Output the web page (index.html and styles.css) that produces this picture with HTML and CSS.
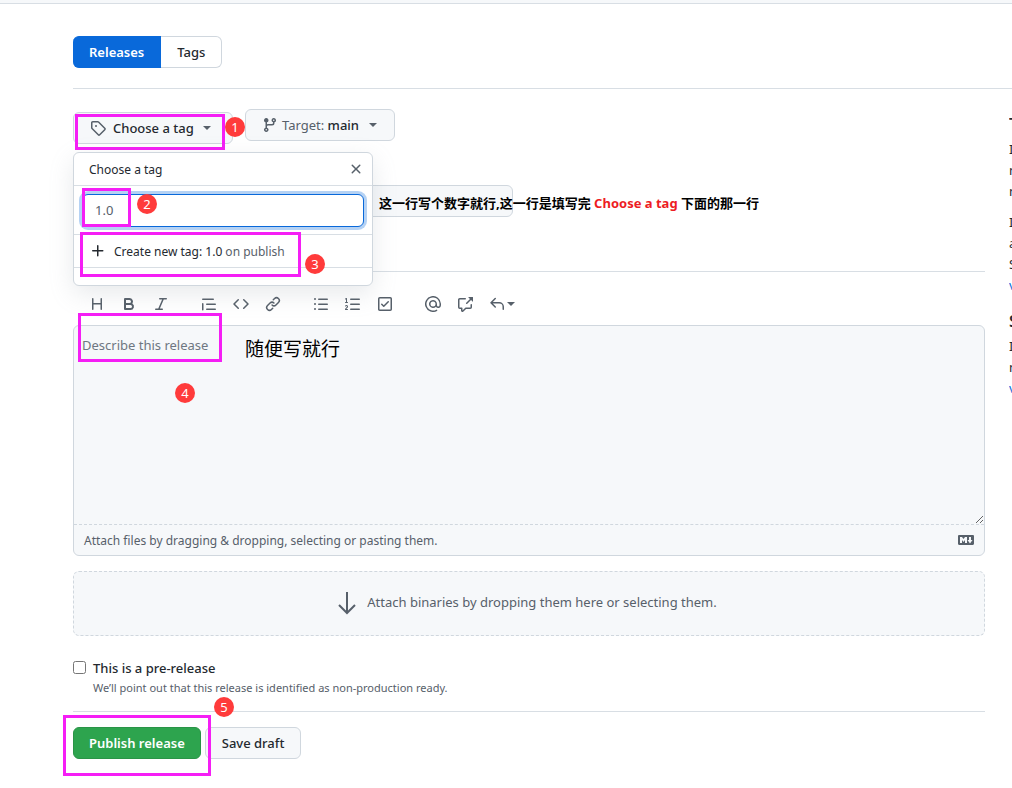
FILE: index.html
```
<!DOCTYPE html>
<html lang="en">
<head>
<meta charset="utf-8">
<title>New release</title>
<link rel="stylesheet" href="styles.css">
</head>
<body>
<header class="topbar"></header>
<main class="page">
  <nav class="subnav">
    <a class="subnav-item selected" href="#">Releases</a>
    <a class="subnav-item" href="#">Tags</a>
  </nav>
  <div class="columns">
    <form class="form">
      <div class="selectors">
        <div class="tag-picker">
          <button class="btn tag-btn" type="button">
            <svg class="icon" viewBox="0 0 16 16"><path d="M1.750 2.750a1 1 0 011-1h5.025a1 1 0 01.707.293l6.250 6.250a1 1 0 010 1.414l-5.025 5.025a1 1 0 01-1.414 0l-6.250-6.250a1 1 0 01-.293-.707z" fill="none" stroke="#57606a" stroke-width="1.500"/><circle cx="6" cy="6" r="1"/></svg>
            <span class="tag-label">Choose a tag</span><span class="caret"></span>
          </button>
          <span class="frame frame-tag"></span>
          <span class="badge badge-1">1</span>
          <div class="popover">
            <div class="popover-head">
              <span>Choose a tag</span>
              <button class="close" type="button" aria-label="Close"><svg class="icon" viewBox="0 0 16 16"><path d="M3.72 3.72a.75.75 0 011.06 0L8 6.94l3.22-3.22a.75.75 0 111.06 1.06L9.06 8l3.22 3.22a.75.75 0 11-1.06 1.06L8 9.06l-3.22 3.22a.75.75 0 01-1.06-1.06L6.94 8 3.72 4.78a.75.75 0 010-1.06z"/></svg></button>
            </div>
            <div class="popover-search">
              <input class="tag-input" type="text" value="1.0" aria-label="Find or create a new tag">
              <span class="frame frame-input"></span>
              <span class="badge badge-2">2</span>
            </div>
            <button class="create" type="button">
              <svg class="icon" viewBox="0 0 16 16"><path d="M7.75 2a.75.75 0 01.75.75V7h4.25a.75.75 0 110 1.5H8.5v4.250a.75.75 0 11-1.500 0V8.500H2.750a.75.75 0 010-1.500H7V2.750A.75.75 0 017.750 2z"/></svg>
              <span><span class="strong">Create new tag: 1.0</span> on publish</span>
            </button>
            <div class="popover-foot"></div>
            <span class="frame frame-create"></span>
            <span class="badge badge-3">3</span>
          </div>
        </div>
        <button class="btn target-btn" type="button">
          <svg class="icon" viewBox="0 0 16 16"><path d="M11.75 2.5a.75.75 0 100 1.500.75.75 0 000-1.500zm-2.250.75a2.250 2.250 0 113 2.122V6A2.500 2.500 0 0110 8.500H6a1 1 0 00-1 1v1.128a2.251 2.251 0 11-1.500 0V5.372a2.250 2.250 0 111.500 0v1.836A2.492 2.492 0 016 7h4a1 1 0 001-1v-.628A2.250 2.250 0 019.500 3.250zM4.250 12a.75.75 0 100 1.500.75.75 0 000-1.500zM3.500 3.250a.75.75 0 111.500 0 .75.75 0 01-1.500 0z"/></svg>
          <span class="muted">Target: <span class="strong">main</span></span><span class="caret"></span>
        </button>
      </div>

      <div class="title-row">
        <input class="title-input" type="text" aria-label="Release title">
        <p class="note title-note">这一行写个数字就行,这一行是填写完 <span class="red">Choose a tag</span> 下面的那一行</p>
      </div>

      <div class="toolbar">
        <div class="tools">
          <button class="tool" type="button" aria-label="Heading"><svg class="icon" viewBox="0 0 16 16"><path d="M3.750 2a.75.75 0 01.75.75V7h7V2.750a.75.75 0 011.500 0v10.500a.75.75 0 01-1.500 0V8.500h-7v4.750a.75.75 0 01-1.500 0V2.750A.75.75 0 013.750 2z"/></svg></button>
          <button class="tool" type="button" aria-label="Bold"><svg class="icon" viewBox="0 0 16 16"><path fill-rule="evenodd" d="M4 2a1 1 0 00-1 1v10a1 1 0 001 1h5.500a3.500 3.500 0 001.852-6.470A3.500 3.500 0 008.500 2H4zm4.500 5a1.500 1.500 0 100-3H5v3h3.500zM5 9v3h4.500a1.500 1.500 0 000-3H5z"/></svg></button>
          <button class="tool" type="button" aria-label="Italic"><svg class="icon" viewBox="0 0 16 16"><path d="M6 2.750A.75.75 0 016.750 2h6.500a.75.75 0 010 1.500h-2.505l-3.858 9H9.250a.75.75 0 010 1.500h-6.500a.75.75 0 010-1.500h2.505l3.858-9H6.750A.75.75 0 016 2.750z"/></svg></button>
        </div>
        <div class="tools">
          <button class="tool" type="button" aria-label="Quote"><svg class="icon" viewBox="0 0 16 16"><path d="M1.750 2.500a.75.75 0 000 1.500h10.500a.75.75 0 000-1.500H1.750zm4 5a.75.75 0 000 1.500h8.500a.75.75 0 000-1.500h-8.500zm0 5a.75.75 0 000 1.500h8.500a.75.75 0 000-1.500h-8.500zM2.500 7.750a.75.75 0 00-1.500 0v6a.75.75 0 001.500 0v-6z"/></svg></button>
          <button class="tool" type="button" aria-label="Code"><svg class="icon" viewBox="0 0 16 16"><path d="M4.720 3.220a.75.75 0 011.060 1.060L2.060 8l3.720 3.720a.75.75 0 11-1.060 1.060L.470 8.530a.75.75 0 010-1.060l4.250-4.250zm6.560 0a.75.75 0 10-1.060 1.060L13.940 8l-3.720 3.720a.75.75 0 101.060 1.060l4.250-4.250a.75.75 0 000-1.060l-4.250-4.250z"/></svg></button>
          <button class="tool" type="button" aria-label="Link"><svg class="icon" viewBox="0 0 16 16"><path d="M7.775 3.275a.75.75 0 001.060 1.060l1.250-1.250a2 2 0 112.830 2.830l-2.500 2.500a2 2 0 01-2.830 0 .75.75 0 00-1.060 1.060 3.500 3.500 0 004.950 0l2.500-2.500a3.500 3.500 0 00-4.950-4.950l-1.250 1.250zm-4.690 9.640a2 2 0 010-2.830l2.500-2.500a2 2 0 012.830 0 .75.75 0 001.060-1.060 3.500 3.500 0 00-4.950 0l-2.500 2.500a3.500 3.500 0 004.950 4.950l1.250-1.250a.75.75 0 00-1.060-1.060l-1.250 1.250a2 2 0 01-2.830 0z"/></svg></button>
        </div>
        <div class="tools">
          <button class="tool" type="button" aria-label="Bulleted list"><svg class="icon" viewBox="0 0 16 16"><path d="M2 4a1 1 0 100-2 1 1 0 000 2zm3.750-1.500a.75.75 0 000 1.500h8.500a.75.75 0 000-1.500h-8.500zm0 5a.75.75 0 000 1.500h8.500a.75.75 0 000-1.500h-8.500zm0 5a.75.75 0 000 1.500h8.500a.75.75 0 000-1.500h-8.500zM3 8a1 1 0 11-2 0 1 1 0 012 0zm-1 6a1 1 0 100-2 1 1 0 000 2z"/></svg></button>
          <button class="tool" type="button" aria-label="Numbered list"><svg class="icon" viewBox="0 0 16 16"><path d="M2.003 2.500a.5.5 0 00-.723-.447l-1.003.5a.5.5 0 00.446.895l.280-.140V6H.5a.5.5 0 000 1h2.006a.5.5 0 100-1h-.503V2.500zM5 3.250a.75.75 0 01.75-.75h8.500a.75.75 0 010 1.500h-8.500A.75.75 0 015 3.250zm0 5a.75.75 0 01.75-.75h8.500a.75.75 0 010 1.500h-8.500A.75.75 0 015 8.250zm0 5a.75.75 0 01.75-.75h8.500a.75.75 0 010 1.500h-8.500a.75.75 0 01-.75-.75zM.924 10.320l.003-.004a.851.851 0 01.144-.153A.660.660 0 011.500 10c.195 0 .306.068.374.146a.570.570 0 01.128.376c0 .453-.269.682-.800 1.078l-.035.025C.692 11.980 0 12.495 0 13.500a.5.5 0 00.5.5h2.003a.5.5 0 000-1H1.146c.132-.197.351-.372.654-.597l.047-.035c.470-.350 1.156-.858 1.156-1.845 0-.365-.118-.744-.377-1.038-.268-.303-.658-.484-1.126-.484-.480 0-.840.202-1.068.392a1.858 1.858 0 00-.348.384l-.007.011a.5.5 0 00.851.525z"/></svg></button>
          <button class="tool" type="button" aria-label="Task list"><svg class="icon" viewBox="0 0 16 16"><path fill-rule="evenodd" d="M2.500 2.750a.25.25 0 01.25-.25h10.500a.25.25 0 01.25.25v10.500a.25.25 0 01-.25.25H2.750a.25.25 0 01-.25-.25V2.750zM2.750 1A1.750 1.750 0 001 2.750v10.500c0 .966.784 1.750 1.750 1.750h10.500A1.750 1.750 0 0015 13.250V2.750A1.750 1.750 0 0013.250 1H2.750zm9.030 5.280a.75.75 0 00-1.060-1.060L6.750 9.190 5.280 7.720a.75.75 0 00-1.060 1.060l2 2a.75.75 0 001.060 0l4.500-4.500z"/></svg></button>
        </div>
        <div class="tools">
          <button class="tool" type="button" aria-label="Mention"><svg class="icon" viewBox="0 0 16 16"><path fill-rule="evenodd" d="M4.750 2.370a6.500 6.500 0 006.500 11.260.75.75 0 01.750 1.298 8 8 0 113.994-7.273.754.754 0 01.006.095v1.500a2.750 2.750 0 01-5.072 1.475A4 4 0 1112 8v1.250a1.250 1.250 0 002.500 0V7.867a6.500 6.500 0 00-9.750-5.496zM10.500 8a2.500 2.500 0 10-5 0 2.500 2.500 0 005 0z"/></svg></button>
          <button class="tool" type="button" aria-label="Reference"><svg class="icon" viewBox="0 0 16 16"><path d="M2.750 3.500a.25.25 0 00-.25.25v7.500c0 .138.112.25.25.25h2a.75.75 0 01.75.75v2.190l2.720-2.720a.75.75 0 01.530-.220h4.500a.25.25 0 00.25-.25v-2.500a.75.75 0 111.500 0v2.500A1.750 1.750 0 0113.250 13H9.060l-2.573 2.573A1.457 1.457 0 014 14.543V13H2.750A1.750 1.750 0 011 11.250v-7.500C1 2.784 1.784 2 2.750 2h5.500a.75.75 0 010 1.500h-5.500zM16 1.250v4.146a.25.25 0 01-.427.177L14.030 4.030l-3.750 3.750a.75.75 0 11-1.060-1.060l3.750-3.750-1.543-1.543A.25.25 0 0111.604 1h4.146a.25.25 0 01.25.25z"/></svg></button>
          <button class="tool reply" type="button" aria-label="Saved replies"><svg class="icon" viewBox="0 0 16 16"><path d="M6.780 1.970a.75.75 0 010 1.060L3.810 6h6.440A4.750 4.750 0 0115 10.750v2.500a.75.75 0 01-1.500 0v-2.500a3.250 3.250 0 00-3.250-3.250H3.810l2.970 2.970a.75.75 0 11-1.060 1.060L1.470 7.280a.75.75 0 010-1.060l4.250-4.250a.75.75 0 011.060 0z"/></svg><span class="caret"></span></button>
        </div>
      </div>

      <div class="editor">
        <textarea class="body-input" placeholder="Describe this release" aria-label="Describe this release"></textarea>
        <label class="attach"><span>Attach files by dragging &amp; dropping, selecting or pasting them.</span>
          <svg class="icon" viewBox="0 0 16 16"><path fill-rule="evenodd" d="M14.850 3H1.150C.520 3 0 3.520 0 4.150v7.690C0 12.480.520 13 1.150 13h13.690c.640 0 1.150-.520 1.150-1.150v-7.700C16 3.520 15.480 3 14.850 3zM9 11H7V8L5.500 9.920 4 8v3H2V5h2l1.500 2L7 5h2v6zm2.990.5L9.500 8H11V5h2v3h1.500l-2.510 3.500z"/></svg>
        </label>
        <span class="frame frame-body"></span>
        <span class="badge badge-4">4</span>
        <p class="note body-note">随便写就行</p>
      </div>

      <div class="dropzone">
        <svg class="arrow" viewBox="0 0 24 24"><path d="M12 1v21M4 14l8 8 8-8" fill="none" stroke="#57606a" stroke-width="2"/></svg>
        <span>Attach binaries by dropping them here or selecting them.</span>
      </div>

      <div class="prerelease">
        <input class="check" type="checkbox" id="pre">
        <div><label class="check-label" for="pre">This is a pre-release</label>
        <p class="hint">We’ll point out that this release is identified as non-production ready.</p></div>
      </div>

      <div class="actions">
        <button class="btn primary" type="button">Publish release</button>
        <button class="btn draft" type="button">Save draft</button>
        <span class="frame frame-publish"></span>
        <span class="badge badge-5">5</span>
      </div>
    </form>
    <aside class="sidebar">
      <h2>T</h2>
      <p>I<br>n<br>n</p>
      <p>I<br>a<br>S<br><a href="#">v</a></p>
      <h2>S</h2>
      <p>I<br>n<br><a href="#">v</a></p>
    </aside>
  </div>
</main>
</body>
</html>
```
FILE: styles.css
```
* { box-sizing: border-box; }
body {
  margin: 0;
  background: #fff;
  color: #24292f;
  font-family: "Noto Sans", "Noto Sans CJK SC", sans-serif;
  font-size: 13px;
  line-height: 21px;
  overflow-x: hidden;
}
p, h2 { margin: 0; }
a { color: #0969da; text-decoration: none; }
button, input, textarea { font: inherit; color: inherit; }
.icon { width: 16px; height: 16px; fill: #57606a; flex: none; display: block; }
.strong { color: #24292f; font-weight: 500; }
.muted { color: #57606a; }

.topbar { height: 4px; background: #f6f8fa; border-bottom: 1px solid #d8dee4; }
.page { padding: 32px 0 0 73px; }

.subnav { display: flex; padding-bottom: 20px; border-bottom: 1px solid #d8dee4; }
.subnav-item {
  padding: 5px 16px;
  height: 32px;
  line-height: 20px;
  font-weight: 500;
  color: #24292f;
  border: 1px solid #d0d7de;
  border-left: 0;
  border-radius: 0 6px 6px 0;
}
.subnav-item.selected {
  color: #fff;
  font-weight: 600;
  background: #0969da;
  border-color: #0969da;
  border-radius: 6px 0 0 6px;
}

.columns { display: grid; grid-template-columns: minmax(0, 1fr) 3px; gap: 24px; padding-top: 20px; }

.btn {
  display: inline-flex;
  align-items: center;
  height: 32px;
  padding: 0 16px;
  font-weight: 500;
  background: #f6f8fa;
  border: 1px solid #d0d7de;
  border-radius: 6px;
  white-space: nowrap;
}
.caret { border: 4px solid transparent; border-top-color: #57606a; border-bottom: 0; }
.selectors { display: flex; gap: 12px; align-items: flex-start; }
.tag-picker { position: relative; padding-top: 3px; }
.tag-btn { width: 160px; gap: 7px; }
.target-btn { width: 150px; gap: 4px; font-weight: 400; }
.tag-btn .caret { margin-left: 2px; }
.target-btn .caret { margin-left: 6px; }

.popover {
  position: absolute;
  z-index: 3;
  top: 43px;
  left: 0;
  width: 300px;
  background: #fff;
  border: 1px solid #d0d7de;
  border-radius: 6px;
  box-shadow: 0 8px 24px rgba(140, 149, 159, 0.2);
  font-size: 12px;
}
.popover-head {
  display: flex;
  justify-content: space-between;
  align-items: center;
  height: 33px;
  padding: 0 8px 0 15px;
  border-bottom: 1px solid #d8dee4;
}
.close { padding: 0; border: 0; background: none; }
.popover-search { position: relative; padding: 8px 8px 7px; border-bottom: 1px solid #d8dee4; }
.tag-input {
  display: block;
  width: 100%;
  height: 33px;
  padding: 0 12px 2px;
  color: #57606a;
  font-size: 13px;
  border: 1px solid #0969da;
  border-radius: 6px;
  outline: none;
  box-shadow: 0 0 0 3px rgba(9, 105, 218, 0.3);
}
.create {
  display: flex;
  align-items: center;
  gap: 8px;
  width: 100%;
  height: 33px;
  padding: 0 16px;
  color: #57606a;
  background: none;
  border: 0;
  border-bottom: 1px solid #d8dee4;
}
.create .icon { fill: #24292f; }
.create .strong { font-weight: 400; }
.popover-foot { height: 17px; }

.title-row { position: relative; padding: 41px 0 54px; border-bottom: 1px solid #d8dee4; }
.title-input {
  display: block;
  width: 440px;
  height: 32px;
  background: #f6f8fa;
  border: 1px solid #d0d7de;
  border-radius: 6px;
}
.note { position: absolute; color: #000; white-space: nowrap; }
.title-note { left: 306px; top: 49px; font-weight: 700; }
.red { color: #ed1c24; }

.toolbar { display: flex; gap: 16px; padding: 20px 8px 9px; }
.tools { display: flex; }
.tool { display: flex; align-items: center; padding: 4px 8px; border: 0; background: none; }
.tool.reply { gap: 2px; }

.editor { position: relative; background: #f6f8fa; border: 1px solid #d0d7de; border-radius: 6px; }
.body-input {
  display: block;
  width: 100%;
  height: 198px;
  padding: 9px 8px;
  background: transparent;
  border: 0;
  outline: none;
  resize: vertical;
}
.body-input::placeholder { color: #6e7781; }
.attach {
  display: flex;
  align-items: center;
  justify-content: space-between;
  height: 31px;
  padding: 0 10px;
  color: #57606a;
  font-size: 12px;
  border-top: 1px dashed #d0d7de;
}
.body-note { left: 171px; top: 9px; font-size: 19px; line-height: 28px; }

.dropzone {
  display: flex;
  align-items: center;
  justify-content: center;
  gap: 8px;
  height: 65px;
  margin-top: 15px;
  padding: 0 6px 2px 0;
  color: #57606a;
  background: #f6f8fa;
  border: 1px dashed #d0d7de;
  border-radius: 6px;
}
.arrow { width: 24px; height: 24px; }

.prerelease { display: flex; gap: 7px; padding: 22px 0 13px; border-bottom: 1px solid #d8dee4; }
.check { width: 13px; height: 13px; margin: 3px 0 0; }
.check-label { display: block; line-height: 20px; font-weight: 500; }
.hint { color: #57606a; font-size: 11px; line-height: 20px; }

.actions { position: relative; display: flex; gap: 4px; padding: 15px 0 29px; }
.primary { padding: 0 15px; color: #fff; font-weight: 600; background: #2da44e; border-color: #2a9447; }

/* Numbered walkthrough marks drawn over the controls */
.frame { position: absolute; z-index: 2; border: 3px solid #f51ef5; pointer-events: none; }
.badge {
  position: absolute;
  z-index: 4;
  width: 20px;
  height: 20px;
  color: #fff;
  background: #ff3b3b;
  border-radius: 50%;
  font-size: 13px;
  line-height: 20px;
  text-align: center;
}
.frame-tag { left: 2px; top: 5px; width: 150px; height: 36px; }
.badge-1 { left: 152px; top: 8px; }
.frame-input { left: 8px; top: 2px; width: 49px; height: 39px; }
.badge-2 { left: 63px; top: 8px; }
.frame-create { left: 6px; top: 79px; width: 221px; height: 45px; }
.badge-3 { left: 231px; top: 101px; }
.frame-body { left: 4px; top: -13px; width: 144px; height: 49px; }
.badge-4 { left: 101px; top: 57px; }
.frame-publish { left: -10px; top: 3px; width: 148px; height: 61px; }
.badge-5 { left: 141px; top: -15px; }

.sidebar { overflow: hidden; white-space: nowrap; }
.sidebar h2 { padding-top: 3px; font-size: 16px; line-height: 24px; font-weight: 600; }
.sidebar p { margin: 3px 0 10px; }
```
